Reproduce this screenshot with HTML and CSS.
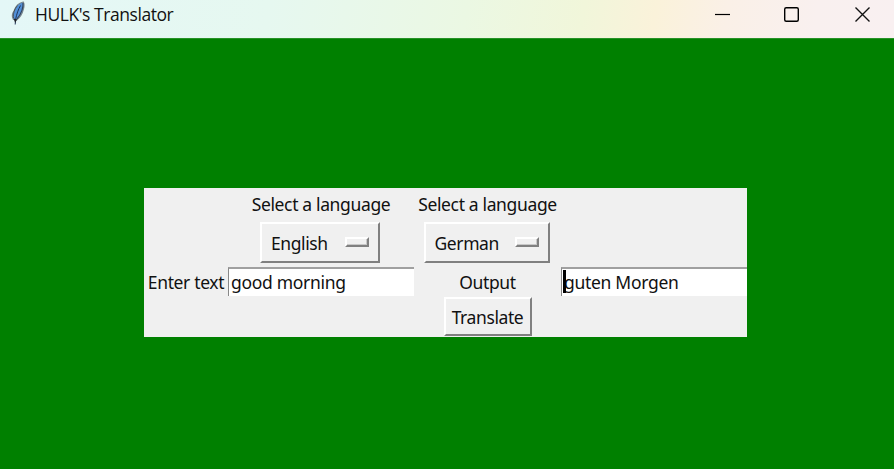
FILE: index.html
```html
<!DOCTYPE html>
<html lang="en">
<head>
<meta charset="utf-8">
<title>HULK's Translator</title>
<link rel="stylesheet" href="styles.css">
</head>
<body>
<header class="titlebar">
  <svg class="feather" width="16" height="26" viewBox="0 0 16 26">
    <path d="M13.2 2 C8.5 3 5.5 6.5 4 11 C2 14 2 17 3.3 19.2 L6.5 20 C10 17.5 12.3 13.5 13.4 9 C14.2 6 14.3 3.5 13.2 2Z" fill="#5290d8" stroke="#7b878c" stroke-width="1.2"/>
    <path d="M13 3 C13.6 7 11.3 14 7 18.8" fill="none" stroke="#34435a" stroke-width="1.1"/>
    <path d="M3.5 18 C2.8 14 4.5 9 7.5 5.5" fill="none" stroke="#4b555c" stroke-width="1"/>
    <path d="M10.5 5.5 C8.5 9 6.5 14 5.5 20 L5.2 24.5" fill="none" stroke="#20355a" stroke-width="1"/>
    <path d="M3.5 18.5 L7 19.3 L5.3 23Z" fill="#20242a"/>
  </svg>
  <h1 class="title">HULK's Translator</h1>
  <div class="controls">
    <svg width="70" height="38" viewBox="0 0 70 38"><path d="M21 14.5H36" stroke="#000" stroke-width="1.2"/></svg>
    <svg width="70" height="38" viewBox="0 0 70 38"><rect x="20.7" y="7.7" width="13.6" height="13.6" rx="1.5" fill="none" stroke="#000" stroke-width="1.4"/></svg>
    <svg width="70" height="38" viewBox="0 0 70 38"><path d="M21.5 7.5L35.5 21.5M35.5 7.5L21.5 21.5" stroke="#111" stroke-width="1.35"/></svg>
  </div>
</header>
<main class="window">
  <form class="panel">
    <span class="label from">Select a language</span>
    <span class="label to">Select a language</span>
    <button type="button" class="raised menu english"><span>English</span><i class="indicator"></i></button>
    <button type="button" class="raised menu german"><span>German</span><i class="indicator"></i></button>
    <span class="label enter">Enter text</span>
    <div class="entry"><span>good morning</span></div>
    <span class="label output">Output</span>
    <div class="entry"><i class="caret"></i><span>guten Morgen</span></div>
    <button type="button" class="raised translate"><span>Translate</span></button>
  </form>
</main>
</body>
</html>
```
FILE: styles.css
```css
* { box-sizing: border-box; }
body {
  margin: 0;
  height: 469px;
  overflow: hidden;
  display: flex;
  flex-direction: column;
  background: #008000;
  font: 17.5px/24px "Noto Sans", "Open Sans", sans-serif;
  color: #111;
}
.titlebar {
  flex: none;
  height: 38px;
  display: flex;
  align-items: flex-start;
  padding-left: 10px;
  background: linear-gradient(100deg, #e4f7f7 0%, #e6f8f0 30%, #ebf8e3 52%, #f1f6da 65%, #faf2da 73%, #faf0e7 81%, #f9f0ef 91%, #f9f0f1 100%);
}
.feather { flex: none; }
.title {
  margin: 2px 0 0 9px;
  font: 400 17.5px/24px "Open Sans", "Noto Sans", sans-serif;
  letter-spacing: -0.45px;
  white-space: nowrap;
}
.controls { display: flex; margin-left: auto; margin-right: -10px; }
.window {
  flex: 1;
  padding: 150px 0 0 144px;
  border-top: 1px solid #279227;
}
.panel {
  width: 603px;
  height: 149px;
  margin-top: -1px;
  display: grid;
  grid-template-columns: 84px 186px 147px 186px;
  grid-template-rows: 34px 45px 30px 40px;
  background: #f0f0f0;
  justify-items: center;
  align-items: start;
  white-space: nowrap;
}
.label { padding-top: 4px; letter-spacing: -0.35px; }
.raised {
  display: flex;
  align-items: center;
  padding: 0;
  border: 2px solid;
  border-color: #fff #808080 #808080 #fff;
  outline: 0;
  background: #f0f0f0;
  color: inherit;
  font: inherit;
  letter-spacing: -0.4px;
}
.menu { height: 41px; justify-content: space-between; padding: 0 9px; }
.english { grid-column: 2; width: 120px; margin-right: 2px; }
.german { grid-column: 3; width: 126px; margin-right: 2px; }
.indicator {
  width: 24px;
  height: 10px;
  margin-top: -2px;
  border: 2px solid;
  border-color: #fff #808080 #808080 #fff;
  box-shadow: inset -1px -1px #c8c8c8;
}
.from { grid-column: 2; }
.to { grid-column: 3; }
.enter, .output { padding-top: 3px; }
.enter { grid-column: 1; }
.entry {
  width: 186px;
  height: 29px;
  position: relative;
  padding: 1px 0 0 2px;
  background: #fff;
  border-top: 2px solid #a0a0a0;
  border-left: 1px solid #888;
  letter-spacing: -0.3px;
}
.caret { position: absolute; left: 1px; top: 1px; width: 3px; height: 23px; background: #000; }
.translate { grid-column: 3; width: 88px; height: 39px; justify-content: center; }
```
